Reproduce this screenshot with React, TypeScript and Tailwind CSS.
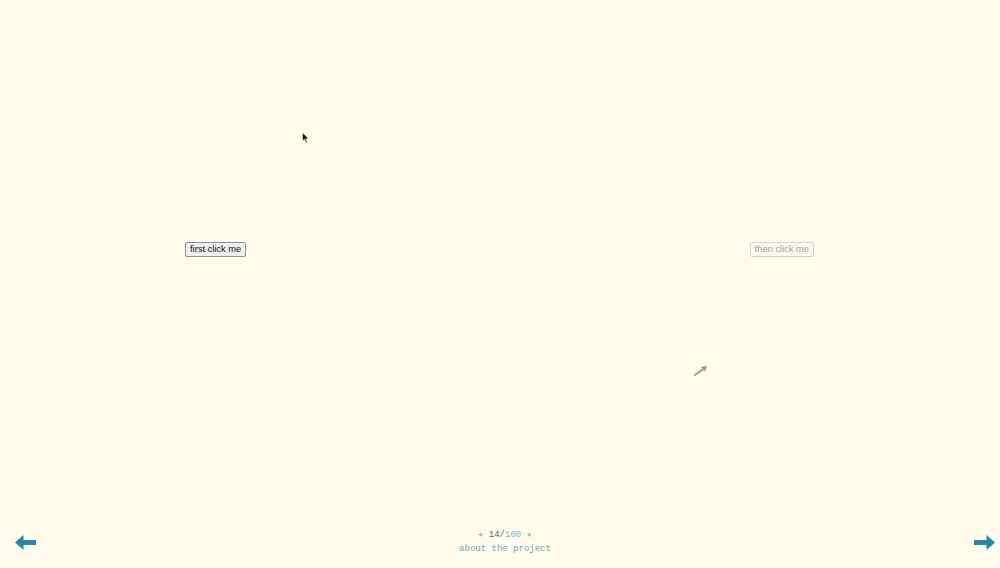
import { useState } from "react";

const Arrow = ({ dir }: { dir: "left" | "right" }) => (
  <svg width="21" height="15" viewBox="0 0 21 15" className={dir === "right" ? "scale-x-[-1]" : ""}>
    <path d="M0 7.5 L8.5 0 L8.5 5 L21 5 L21 10 L8.5 10 L8.5 15 Z" fill="#2a86a3" />
  </svg>
);

const App = () => {
  const [clicked, setClicked] = useState(false);

  return (
    <div className="relative flex h-[568px] w-full flex-col bg-[#fffcee] font-['Liberation_Sans',sans-serif]">
      {/* mouse cursor */}
      <svg width="8" height="12" viewBox="0 0 8 12" className="absolute left-[302px] top-[132px]">
        <path d="M0.5 0.5 L0.5 9 L2.5 7.2 L4 11 L5.3 10.4 L3.9 6.8 L6.6 6.8 Z" fill="#111" stroke="#fff" strokeWidth="0.6" />
      </svg>

      {/* little grey arrow */}
      <svg width="14" height="11" viewBox="0 0 14 11" className="absolute left-[694px] top-[365px]">
        <path d="M1 10 L10 3.5" stroke="#9a9a92" strokeWidth="2" strokeLinecap="round" />
        <path d="M13 1 L7 1.8 L11 6.5 Z" fill="#9a9a92" />
      </svg>

      <div className="flex items-center justify-between pl-[185px] pr-[186px] pt-[242px]">
        <button
          onClick={() => setClicked(true)}
          className="h-[15px] rounded-[2px] border border-[#8f8f8f] bg-[#efefef] px-[4px] text-[9.3px] font-normal leading-[13px] text-[#111]"
        >
          first click me
        </button>
        <button
          disabled={!clicked}
          className="h-[15px] rounded-[2px] border border-[#d3d3cf] bg-[#fbf9f0] px-[4px] text-[9.3px] font-normal leading-[13px] text-[#a3a39e]"
        >
          then click me
        </button>
      </div>

      <div className="mt-auto flex items-end justify-between pb-[12px] pl-[15px] pr-[5px]">
        <button className="mb-[6px]">
          <Arrow dir="left" />
        </button>
        <div className="flex flex-col items-center font-['Liberation_Mono',monospace] text-[9px] leading-[14px]">
          <div className="text-[#5f5f5a]">
            <span className="text-[#4a4a46]">✧</span> 14/<span className="text-[#7ab3c7]">100</span>{" "}
            <span className="text-[#4a4a46]">✧</span>
          </div>
          <a className="text-[#6aa9bf]">about the project</a>
        </div>
        <button className="mb-[6px]">
          <Arrow dir="right" />
        </button>
      </div>
    </div>
  );
};

export default App;
